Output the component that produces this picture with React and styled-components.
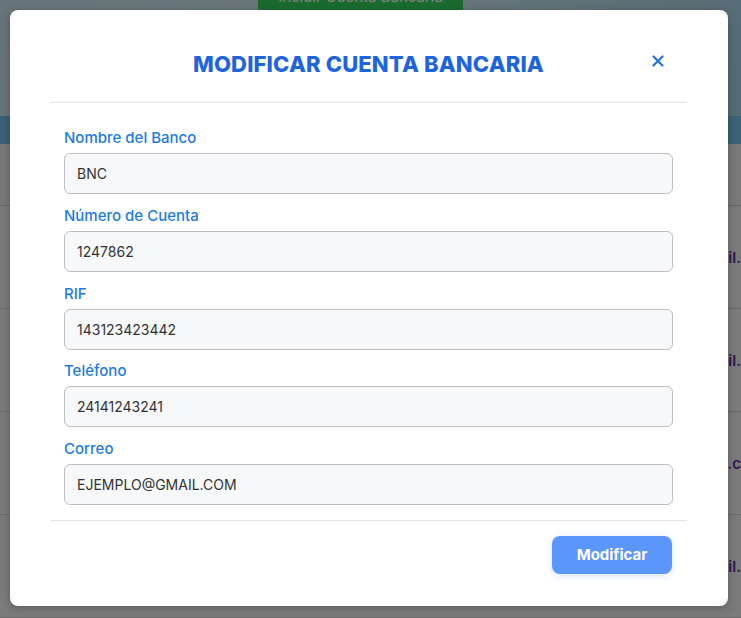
import React from 'react';
import styled, { createGlobalStyle } from 'styled-components';

const GlobalStyle = createGlobalStyle`
    html, body {
        margin: 0;
        padding: 0;
        font-family: "Inter", "Noto Sans", sans-serif;
    }
`;

const Page = styled.div`
    position: relative;
    width: 741px;
    height: 618px;
    overflow: hidden;
    background: #f4f4f4;
`;

const Hero = styled.div`
    height: 116px;
    display: flex;
    justify-content: center;
    background: linear-gradient(115deg, #cfe9f3 0%, #d9f1f8 40%, #c4e6f1 70%, #a9d7ea 100%);
`;

const AddButton = styled.div`
    margin-top: -24px;
    margin-right: 20px;
    width: 205px;
    height: 34px;
    background: #34d65c;
    color: #ffffff;
    font-size: 15px;
    display: flex;
    align-items: flex-end;
    justify-content: center;
    padding-bottom: 4px;
    box-sizing: border-box;
`;

const Band = styled.div`
    height: 28px;
    background: #78c4ec;
`;

const TableHead = styled.div`
    height: 61px;
    display: flex;
    align-items: center;
    color: #1c6fd4;
    font-size: 14px;
    background: #f2f2f4;
    border-bottom: 1px solid #cfcfcf;
`;

const Row = styled.div`
    height: 102px;
    display: flex;
    align-items: center;
    justify-content: flex-end;
    border-bottom: 1px solid #d6d6d6;
    color: #6a2aa8;
    font-weight: 600;
    font-size: 15px;
    background: #f6f6f6;
`;

const Overlay = styled.div`
    position: absolute;
    inset: 0;
    background: rgba(0, 0, 0, 0.5);
    padding: 10px 13px 12px 10px;
    box-sizing: border-box;
    display: flex;
`;

const Modal = styled.div`
    flex: 1;
    background: #ffffff;
    border-radius: 8px;
    box-shadow: 0 2px 10px rgba(0, 0, 0, 0.25);
    display: flex;
    flex-direction: column;
    padding: 0 41px 0 40px;
`;

const Header = styled.div`
    position: relative;
    display: flex;
    justify-content: center;
    padding: 39px 0 23px;
    border-bottom: 1px solid #e2e2e8;
`;

const Title = styled.h2`
    margin: 0;
    font-size: 22px;
    line-height: 30px;
    font-weight: 800;
    color: #1f64df;
    letter-spacing: 0.15px;
`;

const CloseButton = styled.button`
    position: absolute;
    right: 22px;
    top: 44px;
    width: 14px;
    height: 14px;
    padding: 0;
    border: none;
    background: none;
    display: flex;
    align-items: center;
    justify-content: center;
    cursor: pointer;
`;

const Form = styled.div`
    padding: 24px 14px 4px;
    display: flex;
    flex-direction: column;
`;

const Field = styled.div`
    display: flex;
    flex-direction: column;
    margin-bottom: 10.75px;
`;

const Label = styled.label`
    font-size: 15px;
    line-height: 21px;
    font-weight: 500;
    color: #217bdc;
    margin-bottom: 5px;
`;

const Input = styled.input`
    height: 41px;
    box-sizing: border-box;
    border: 1px solid #bfbfc2;
    border-radius: 6px;
    background: #f7f8fa;
    padding: 0 12px;
    font-family: inherit;
    font-size: 14px;
    color: #333333;
    outline: none;
`;

const Footer = styled.div`
    border-top: 1px solid #e2e2e8;
    display: flex;
    justify-content: flex-end;
    padding: 15px 15px 0;
`;

const SubmitButton = styled.button`
    width: 120px;
    height: 38px;
    border: none;
    border-radius: 8px;
    background: #5b96fb;
    color: #ffffff;
    font-family: inherit;
    font-size: 15px;
    font-weight: 700;
    box-shadow: 0 2px 8px rgba(91, 150, 251, 0.25);
    cursor: pointer;
`;

const fields = [
    { label: 'Nombre del Banco', value: 'BNC' },
    { label: 'Número de Cuenta', value: '1247862' },
    { label: 'RIF', value: '143123423442' },
    { label: 'Teléfono', value: '24141243241' },
    { label: 'Correo', value: 'EJEMPLO@GMAIL.COM' },
];

const rows = ['ail.', 'il.', 'ail.c', 'ail.'];

const App = () => (
    <>
        <GlobalStyle />
        <Page>
            <Hero>
                <AddButton>Incluir Cuenta Bancaria</AddButton>
            </Hero>
            <Band />
            <TableHead />
            {rows.map((r, i) => (
                <Row key={i}>{r}</Row>
            ))}
            <Overlay>
                <Modal>
                    <Header>
                        <Title>MODIFICAR CUENTA BANCARIA</Title>
                        <CloseButton aria-label="Cerrar">
                            <svg width="12" height="12" viewBox="0 0 12 12">
                                <path d="M1.5 1.5 L10.5 10.5 M10.5 1.5 L1.5 10.5" stroke="#2271e0" strokeWidth="2.2" strokeLinecap="round" />
                            </svg>
                        </CloseButton>
                    </Header>
                    <Form>
                        {fields.map((f) => (
                            <Field key={f.label}>
                                <Label>{f.label}</Label>
                                <Input defaultValue={f.value} />
                            </Field>
                        ))}
                    </Form>
                    <Footer>
                        <SubmitButton>Modificar</SubmitButton>
                    </Footer>
                </Modal>
            </Overlay>
        </Page>
    </>
);

export default App;
